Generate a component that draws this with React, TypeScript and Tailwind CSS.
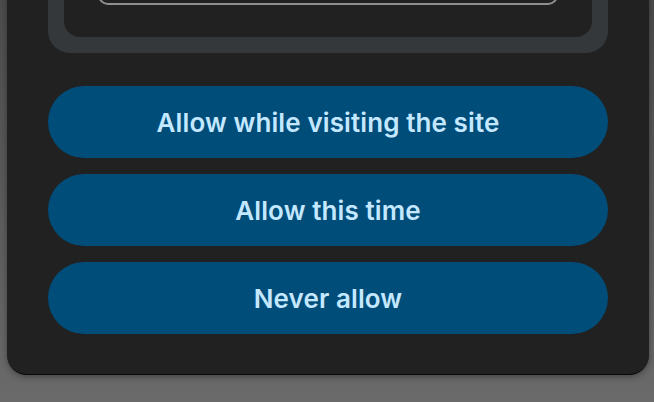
import React from 'react';

const choices = ['Allow while visiting the site', 'Allow this time', 'Never allow'];

export default function App() {
  return (
    <div
      className="h-[402px] w-[654px] overflow-hidden bg-gradient-to-b from-[#4c4c4c] to-[#6a6a6a] pl-[7px] pr-[5px]"
      style={{ fontFamily: 'Inter, "Noto Sans", sans-serif' }}
    >
      {/* Permission dialog, top scrolled out of view */}
      <div className="-mt-[77px] flex flex-col rounded-b-[20px] border-b border-black/70 bg-[#212121] px-[41px] pb-[40px] shadow-[0_2px_6px_rgba(0,0,0,0.35)]">
        <div className="rounded-[22px] bg-[#35383b] p-4">
          <div className="rounded-[16px] bg-[#212121] px-[34px] pb-[32px] pt-[20px]">
            <div className="h-[46px] rounded-[10px] border-2 border-[#8f8f8f]" />
          </div>
        </div>

        <div className="mt-[33px] flex flex-col gap-4">
          {choices.map((label) => (
            <button
              key={label}
              className="flex h-[72px] items-center justify-center rounded-full bg-[#004d7a] text-[26px] font-semibold tracking-[0.1px] text-[#c4e8ff]"
            >
              {label}
            </button>
          ))}
        </div>
      </div>
    </div>
  );
}
